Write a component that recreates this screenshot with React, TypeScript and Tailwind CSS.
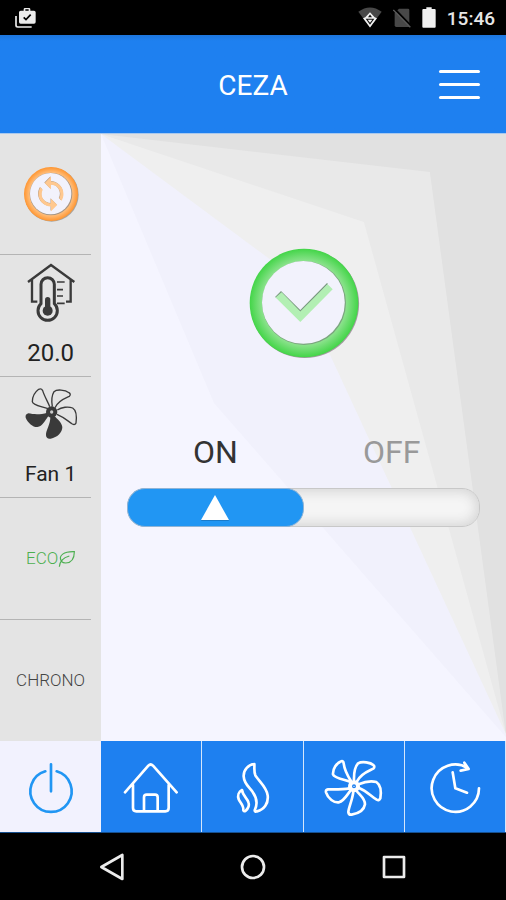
import { useState } from "react";
import type { ReactNode } from "react";

const thinWhite = {
  fill: "none",
  stroke: "#fff",
  strokeWidth: 8,
  strokeLinecap: "round" as const,
  strokeLinejoin: "round" as const,
};

function StatusBar() {
  return (
    <div className="flex h-[35px] items-center justify-between bg-black pr-[11px] pl-[15px]">
      <svg viewBox="0 0 63 60" className="h-5 w-[21px]" aria-hidden="true">
        <path d="M3 24V52Q3 57 8 57H50" fill="none" stroke="#ececec" strokeWidth="5" />
        <path
          d="M17 8H26V4Q26 0 30 0H42Q46 0 46 4V8H57Q62 8 62 13V42Q62 47 57 47H17Q12 47 12 42V13Q12 8 17 8zM31 8H41V4H31z"
          fill="#ececec"
          fillRule="evenodd"
        />
        <path d="M26 28L33 35L47 20" fill="none" stroke="#000" strokeWidth="5" />
      </svg>
      <div className="flex items-center gap-[11px]">
        <svg viewBox="0 0 72 62" className="h-[21px] w-6" aria-hidden="true">
          <path d="M36 61L1 14Q36-12 71 14z" fill="#484848" />
          <path d="M36 61L15 33L22 30L36 15L50 30L57 33z" fill="#f2f2f2" />
          <path d="M23 35H49L36 53zM36 22L42 30H30z" fill="#111" />
          <path d="M29 38H43L36 47z" fill="#f2f2f2" />
        </svg>
        <svg viewBox="0 0 54 60" className="h-5 w-[18px]" aria-hidden="true">
          <path d="M18 2H45Q49 2 49 6V57H10Q5 57 5 52V14z" fill="#484848" />
          <path d="M5 3L55 55" stroke="#000" strokeWidth="6" />
          <path d="M1 6L52 58" stroke="#5a5a5a" strokeWidth="4" />
        </svg>
        <svg viewBox="0 0 42 63" className="h-[21px] w-3.5" aria-hidden="true">
          <path d="M13 1H29V6H38Q41 6 41 9V59Q41 62 38 62H4Q1 62 1 59V9Q1 6 4 6H13z" fill="#f0f0f0" />
        </svg>
        <span className="pt-0.5 text-[19px] leading-6 font-medium text-[#e6e6e6]">15:46</span>
      </div>
    </div>
  );
}

function Header() {
  return (
    <header className="grid h-[99px] grid-cols-[1fr_auto_1fr] items-center border-b border-[#a9c9ee] bg-[#1e80f0] bg-linear-to-b from-[#1d76dd] to-[#1e80f0] to-6% px-[26px]">
      <span />
      <h1 className="pt-1 text-[28px] leading-8 text-white">CEZA</h1>
      <button type="button" aria-label="Menu" className="flex w-[41px] flex-col gap-2.5 justify-self-end">
        <span className="h-[3px] w-full rounded-full bg-white" />
        <span className="h-[3px] w-full rounded-full bg-white" />
        <span className="h-[3px] w-full rounded-full bg-white" />
      </button>
    </header>
  );
}

function SyncBadge() {
  return (
    <svg viewBox="0 0 168 168" className="size-14" aria-hidden="true">
      <defs>
        <radialGradient id="orangeRing">
          <stop offset="0.76" stopColor="#ffc486" />
          <stop offset="1" stopColor="#ff9530" />
        </radialGradient>
      </defs>
      <circle cx="86" cy="86" r="81" fill="#a9a39c" />
      <circle cx="84" cy="84" r="81" fill="url(#orangeRing)" />
      <circle cx="84" cy="84" r="64" fill="#a89684" />
      <circle cx="83" cy="83" r="62" fill="#f2f2fc" />
      <g transform="translate(84 84) scale(4.68) translate(-12 -12)">
        <path
          transform="translate(-.3 -.3)"
          fill="#b89c80"
          d="M12 4V1L8 5l4 4V6c3.31 0 6 2.69 6 6 0 1.01-.25 1.97-.7 2.8l1.46 1.46C19.54 15.03 20 13.57 20 12c0-4.42-3.58-8-8-8zm0 14c-3.31 0-6-2.69-6-6 0-1.01.25-1.97.7-2.8L5.24 7.74C4.46 8.97 4 10.43 4 12c0 4.42 3.58 8 8 8v3l4-4-4-4v3z"
        />
        <path
          fill="#ffc88f"
          d="M12 4V1L8 5l4 4V6c3.31 0 6 2.69 6 6 0 1.01-.25 1.97-.7 2.8l1.46 1.46C19.54 15.03 20 13.57 20 12c0-4.42-3.58-8-8-8zm0 14c-3.31 0-6-2.69-6-6 0-1.01.25-1.97.7-2.8L5.24 7.74C4.46 8.97 4 10.43 4 12c0 4.42 3.58 8 8 8v3l4-4-4-4v3z"
        />
      </g>
    </svg>
  );
}

function ThermoHouse() {
  return (
    <svg viewBox="63 380 180 180" className="size-[60px]" fill="none" stroke="#3a3a3a" aria-hidden="true">
      <path d="M84 437L153 386L223 437M96 430V496H112M212 430V496H198" strokeWidth="7" />
      <path d="M123 502V444A20 20 0 0 1 163 444V502A29 29 0 1 1 123 502z" strokeWidth="9" />
      <path d="M171 437H194M171 460H189M171 479H189M171 501H194" strokeWidth="5" />
      <circle cx="143" cy="523" r="15" fill="#3a3a3a" stroke="none" />
      <path d="M143 523V490" strokeWidth="16" strokeLinecap="round" />
    </svg>
  );
}

function FanLevel() {
  return (
    <svg viewBox="63 39 180 180" className="size-[60px]" aria-hidden="true">
      <g fill="none" stroke="#3a3a3a" strokeWidth="4">
        <path d="M149 107C145 95 134 78 128 59Q124 51 116 55C104 64 97 80 97 92C98 104 125 106 144 113" />
        <path d="M157 107C154 90 156 72 162 62C170 54 195 56 207 65Q214 70 208 76C195 82 175 88 165 110" />
        <path d="M172 117C185 108 205 106 218 111C229 118 230 140 228 156Q225 163 217 159C205 152 195 140 171 130" />
      </g>
      <g fill="#3a3a3a">
        <path d="M151 136C152 160 137 178 138 193Q139 205 152 203C172 199 187 185 187 168C184 152 172 145 164 136z" />
        <path d="M142 125C120 132 100 130 85 127Q75 130 77 140C84 157 100 169 112 168C128 166 134 150 145 135z" />
        <circle cx="155" cy="123" r="17" />
      </g>
      <circle cx="155" cy="123" r="5" fill="#ccc" />
    </svg>
  );
}

function Leaf() {
  return (
    <svg viewBox="177 536 51 51" className="size-[17px]" fill="none" stroke="#4caf50" strokeWidth="3.5" aria-hidden="true">
      <path d="M187 570C177 552 195 540 226 541C226 562 217 574 200 575C194 575 190 573 187 570M181 586C182 572 190 560 211 554" />
    </svg>
  );
}

function SideRow({ last, children }: { last?: boolean; children: ReactNode }) {
  return (
    <div className="flex flex-col">
      <div className="flex flex-1 flex-col items-center justify-center">{children}</div>
      {!last && <hr className="mr-2.5 border-t border-[#b4b4b4]" />}
    </div>
  );
}

function Sidebar() {
  return (
    <aside className="grid w-1/5 auto-rows-fr bg-[#e4e4e4] text-[#222]">
      <SideRow>
        <SyncBadge />
      </SideRow>
      <SideRow>
        <ThermoHouse />
        <span className="mt-3.5 text-2xl leading-8">20.0</span>
      </SideRow>
      <SideRow>
        <FanLevel />
        <span className="mt-3.5 text-[21px] leading-8">Fan 1</span>
      </SideRow>
      <SideRow>
        <span className="flex items-center text-[17px] font-light text-[#4caf50]">
          ECO
          <Leaf />
        </span>
      </SideRow>
      <SideRow last>
        <span className="text-[17px] font-light text-[#444]">CHRONO</span>
      </SideRow>
    </aside>
  );
}

function Facets() {
  return (
    <svg
      viewBox="0 0 405 607"
      preserveAspectRatio="none"
      className="absolute inset-0 -z-10 h-full w-full"
      aria-hidden="true"
    >
      <rect width="405" height="607" fill="#e1e1e1" />
      <path d="M0 0L329 38L405 600V607H0z" fill="#e9e9e9" />
      <path d="M0 0L263 88L405 600V607H0z" fill="#efefef" />
      <path d="M0 0L193 143L405 600V607H0z" fill="#f1f1fc" />
      <path d="M0 0L113 269L405 603V607H0z" fill="#f5f5ff" />
    </svg>
  );
}

function CheckBadge() {
  return (
    <svg viewBox="0 0 112 112" className="size-28" role="img" aria-label="Active">
      <defs>
        <radialGradient id="greenRing">
          <stop offset="0.76" stopColor="#90e391" />
          <stop offset="1" stopColor="#43d548" />
        </radialGradient>
      </defs>
      <circle cx="56.8" cy="56.8" r="54.3" fill="#a39aa0" />
      <circle cx="56" cy="56" r="54.3" fill="url(#greenRing)" />
      <circle cx="56" cy="56" r="42" fill="#7ba67e" />
      <circle cx="55.4" cy="55.4" r="41.4" fill="#f2f2fc" />
      <path d="M27 50L33 44L52.3 63L79 36L80 37L52.3 66z" fill="#7a9a80" />
      <path d="M27.6 50.6L33.6 45.2L52.3 64.4L79.6 37.2L84.7 42.3L52.3 75z" fill="#b2efb3" />
    </svg>
  );
}

function PowerPanel() {
  const [on, setOn] = useState(true);
  return (
    <main className="relative isolate flex flex-1 flex-col items-center px-[26px] pt-[113px]">
      <Facets />
      <CheckBadge />
      <div className="mt-[73px] grid w-full grid-cols-2 text-center text-[32px] leading-10">
        <label htmlFor="power" className={on ? "text-[#333]" : "text-[#999]"}>
          ON
        </label>
        <span className={on ? "text-[#999]" : "text-[#333]"}>OFF</span>
      </div>
      <div className="relative mt-4 h-[39px] w-full">
        <input
          id="power"
          type="checkbox"
          role="switch"
          checked={on}
          onChange={(e) => setOn(e.target.checked)}
          className="block h-full w-full appearance-none rounded-[18px] border border-[#c8c8c8] bg-[#f5f5f5] shadow-[inset_0_0_12px_3px_#d6d6d6]"
        />
        <span
          className={`pointer-events-none absolute inset-y-0 flex w-1/2 items-center justify-center rounded-[18px] border border-[#8fb4d6] bg-[#2196f3] ${on ? "left-0" : "right-0"}`}
        >
          <svg viewBox="0 0 30 28" className="h-7 w-[30px]" aria-hidden="true">
            <path d="M15 3L29 27H1z" fill="#1b7bc9" />
            <path d="M15 1L29 26H1z" fill="#fff" />
          </svg>
        </span>
      </div>
    </main>
  );
}

function Tab({ label, active, children }: { label: string; active?: boolean; children: ReactNode }) {
  return (
    <button
      type="button"
      aria-label={label}
      className={`flex h-full items-center justify-center ${
        active ? "bg-[#f2f2fe]" : "border-r border-[#d5e6fb] bg-[#1e80f0]"
      }`}
    >
      {children}
    </button>
  );
}

function TabBar() {
  return (
    <nav className="grid h-[92px] grid-cols-5 border-b border-[#17508f] bg-[#1e80f0]">
      <Tab label="Power" active>
        <svg viewBox="61 80 180 180" className="size-[60px]" fill="none" stroke="#2196f3" strokeWidth="8" strokeLinecap="round">
          <path d="M134 123A62 62 0 1 0 168 123M151 102V183" />
        </svg>
      </Tab>
      <Tab label="Home">
        <svg viewBox="363 80 180 180" className="size-[60px]" {...thinWhite}>
          <path d="M375 186L445 106Q452 99 459 106L530 186M399 164V233Q399 243 409 243H496Q506 243 506 233V164M432 240V201Q432 193 440 193H465Q473 193 473 201V240" />
        </svg>
      </Tab>
      <Tab label="Heating">
        <svg viewBox="0 0 180 180" className="size-[60px]" {...thinWhite}>
          <path d="M97 21C80 22 64 38 65 58C66 80 82 91 92 105C104 122 107 142 98 160Q98 166 105 163C126 158 140 140 137 115C134 90 110 72 100 55C95 42 98 30 97 21z" />
          <path d="M60 99C50 104 46 116 50 127C54 137 66 145 64 160Q66 165 71 161C79 154 82 146 80 138C78 125 62 118 60 99z" />
        </svg>
      </Tab>
      <Tab label="Fan">
        <svg viewBox="210 80 180 180" className="size-[60px]" {...thinWhite}>
          <path d="M288 154C272 148 240 143 237 132C236 115 248 98 262 93Q268 91 269 99C271 115 280 135 291 152" />
          <path d="M300 152C299 125 304 108 312 99C325 92 350 97 358 104Q364 109 358 115C345 122 322 128 309 153" />
          <path d="M314 162C330 155 350 151 367 155C380 164 382 185 379 204Q376 212 368 208C350 198 340 183 315 173" />
          <path d="M298 182C297 205 284 230 283 245Q284 254 293 253C312 250 330 240 333 222C334 205 318 195 308 182" />
          <path d="M286 174C265 178 240 177 222 177Q214 178 216 186C222 205 240 218 255 216C270 212 278 195 290 180" />
          <circle cx="300" cy="168" r="12" strokeWidth="12" />
          <circle cx="300" cy="168" r="2" fill="#fff" stroke="none" />
        </svg>
      </Tab>
      <Tab label="Timer">
        <svg viewBox="515 80 180 180" className="size-[60px]" {...thinWhite}>
          <path d="M677 174A71 71 0 1 1 643 113M633 97L646 116L622 121M598 126L606 174L641 187" />
        </svg>
      </Tab>
    </nav>
  );
}

function SystemNav() {
  const line = { fill: "none", stroke: "#ececec", strokeWidth: 8, strokeLinejoin: "round" as const };
  return (
    <div className="grid h-[67px] grid-cols-3 items-center justify-items-center bg-black px-[42px]">
      <button type="button" aria-label="Back">
        <svg viewBox="0 0 78 84" className="h-7 w-[26px]" {...line}>
          <path d="M7 42L70 6V78z" />
        </svg>
      </button>
      <button type="button" aria-label="Home screen">
        <svg viewBox="0 0 78 78" className="size-[26px]" {...line}>
          <circle cx="39" cy="39" r="33" />
        </svg>
      </button>
      <button type="button" aria-label="Recent apps">
        <svg viewBox="0 0 78 78" className="size-[26px]" {...line}>
          <rect x="9" y="9" width="60" height="60" />
        </svg>
      </button>
    </div>
  );
}

export default function App() {
  return (
    <div className="flex min-h-screen flex-col bg-black font-[Roboto,'Noto_Sans',sans-serif]">
      <StatusBar />
      <Header />
      <div className="flex flex-1 items-stretch bg-[#e4e4e4]">
        <Sidebar />
        <PowerPanel />
      </div>
      <TabBar />
      <SystemNav />
    </div>
  );
}
